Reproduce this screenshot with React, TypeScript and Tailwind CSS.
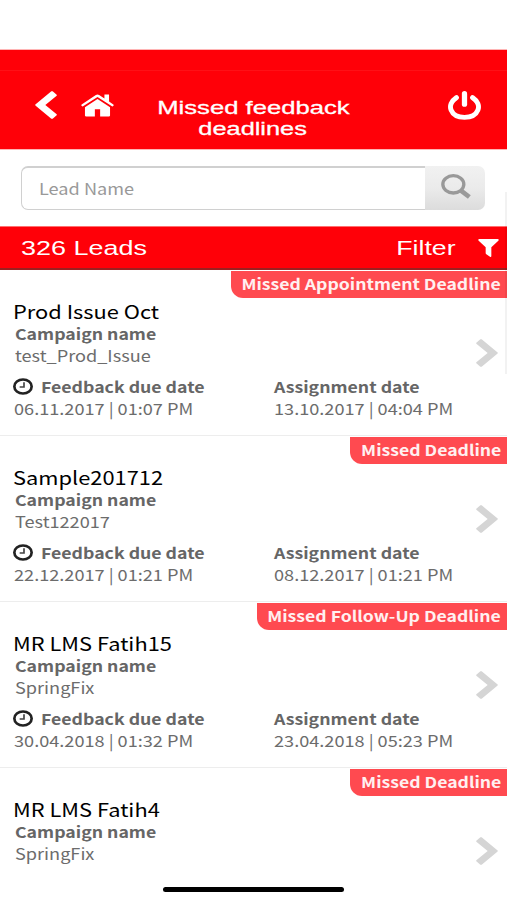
import type { ReactNode } from "react";

const leads = [
  {
    name: "Prod Issue Oct",
    campaign: "test_Prod_Issue",
    due: "06.11.2017 | 01:07 PM",
    assigned: "13.10.2017 | 04:04 PM",
    status: "Missed Appointment Deadline",
    tagWidth: "w-[276px]",
  },
  {
    name: "Sample201712",
    campaign: "Test122017",
    due: "22.12.2017 | 01:21 PM",
    assigned: "08.12.2017 | 01:21 PM",
    status: "Missed Deadline",
    tagWidth: "w-[157px]",
  },
  {
    name: "MR LMS Fatih15",
    campaign: "SpringFix",
    due: "30.04.2018 | 01:32 PM",
    assigned: "23.04.2018 | 05:23 PM",
    status: "Missed Follow-Up Deadline",
    tagWidth: "w-[250.500px]",
  },
  {
    name: "MR LMS Fatih4",
    campaign: "SpringFix",
    due: "",
    assigned: "",
    status: "Missed Deadline",
    tagWidth: "w-[157px]",
  },
];

// Wide text, stretched from its left edge
function Wide({ className, children }: { className: string; children: ReactNode }) {
  return (
    <span className={`block w-max origin-left whitespace-pre ${className}`}>{children}</span>
  );
}

function Label({ children }: { children: ReactNode }) {
  return (
    <Wide className="scale-x-[1.18] pt-px text-[15px] font-bold leading-[21px] text-[#666]">
      {children}
    </Wide>
  );
}

function Value({ children }: { children: ReactNode }) {
  return (
    <Wide className="scale-x-[1.17] text-[15.5px] leading-[22px] text-[#6c6c6c]">
      {children}
    </Wide>
  );
}

function ClockIcon() {
  return (
    <svg viewBox="0 0 60 51" className="mt-px h-[17px] w-5 shrink-0" fill="none">
      <ellipse cx="30" cy="25.5" rx="26" ry="21" stroke="#222" strokeWidth="8" />
      <path d="M33 13v14H20" stroke="#444" strokeWidth="5" />
    </svg>
  );
}

function LeadRow({ lead }: { lead: (typeof leads)[number] }) {
  return (
    <div className="relative h-[166px] shrink-0 border-b border-[#ededed] pt-[30px]">
      {/* Status tag */}
      <div
        className={`absolute right-0 top-px flex h-[26.5px] items-center justify-end rounded-bl-[12px] bg-[#ff4a50] pr-[6px] ${lead.tagWidth}`}
      >
        <span className="origin-right scale-x-[1.175] whitespace-pre text-[15px] font-bold leading-[26px] text-[#fff0f0]">
          {lead.status}
        </span>
      </div>

      <Wide className="ml-[13px] scale-x-[1.18] text-[18.5px] leading-[22px] text-black">
        {lead.name}
      </Wide>
      <div className="pl-[14.5px]">
        <Label>Campaign name</Label>
        <Value>{lead.campaign}</Value>
      </div>

      {lead.due && (
        <div className="mt-[9px] grid grid-cols-[260px_1fr] pl-[14px]">
          <div>
            <div className="-ml-px flex h-[22px] items-center gap-2">
              <ClockIcon />
              <Label>Feedback due date</Label>
            </div>
            <Value>{lead.due}</Value>
          </div>
          <div>
            <Label>Assignment date</Label>
            <Value>{lead.assigned}</Value>
          </div>
        </div>
      )}

      <svg
        viewBox="0 0 66 84"
        className="absolute right-[9px] top-[69px] h-7 w-[22px]"
        fill="#d5d5d5"
      >
        <path d="M17 1 64 40Q67 42 64 44L17 83Q15 84 13 83L1 73Q0 71 1 70L35 42 1 14Q0 13 1 11L13 1Q15 0 17 1Z" />
      </svg>
    </div>
  );
}

export default function App() {
  return (
    <div className="relative flex h-[900px] w-[507px] flex-col overflow-hidden bg-white font-['Noto_Sans_CJK_SC',sans-serif]">
      <div className="h-[49px] shrink-0" />

      {/* Header */}
      <header className="h-[101px] shrink-0 border-y border-[#ffb5b5] bg-[#ff0008] font-['Liberation_Sans',Arial,sans-serif] text-white">
        <div className="h-[21px] border-b border-[#ff1016]" />
        <div className="flex items-start pl-[35px] pr-[26px] pt-5">
          <svg viewBox="0 0 66 84" className="h-7 w-[22px]" fill="white">
            <path d="M49 1 2 40Q-1 42 2 44L49 83Q51 84 53 83L65 73Q66 71 65 70L31 42 65 14Q66 13 65 11L53 1Q51 0 49 1Z" />
          </svg>
          <svg viewBox="0 0 100 68" className="ml-6 mt-[3px] h-[23px] w-[33px]" fill="white">
            <path d="M45 2Q50-1 55 2L71 13V1H85V22L98 31Q101 34 95 37L50 8 5 37Q-1 34 2 31Z" />
            <path d="M50 14 88 39V64Q88 67 84 67H58V45H42V67H16Q12 67 12 64V39Z" />
          </svg>
          <div className="ml-[42px] mt-[6px] w-[194px]">
            <div className="flex flex-col items-center text-[18.5px] leading-[21px] [-webkit-text-stroke:0.3px_white]">
              <span className="scale-x-[1.385] whitespace-pre">Missed feedback</span>
              <span className="scale-x-[1.37] whitespace-pre">deadlines</span>
            </div>
          </div>
          <svg
            viewBox="0 0 99 88"
            className="-mt-[0.5px] ml-auto h-[29px] w-[33px]"
            fill="none"
            stroke="white"
            strokeWidth="15"
            strokeLinecap="round"
          >
            <path d="M25 20C-8 42 7 80 49.500 80S107 42 74 20" />
            <path d="M49.500 8V40" strokeWidth="16" />
          </svg>
        </div>
      </header>

      {/* Search */}
      <div className="flex h-[76px] shrink-0 items-start pl-[21px] pr-[22px] pt-4">
        <div className="flex h-11 flex-1 items-center rounded-l-[7px] border border-r-0 border-t-2 border-[#d0d0d0] pb-[2px] pl-[17px]">
          <Wide className="scale-x-[1.17] text-[15.5px] leading-[22px] text-[#999]">
            Lead Name
          </Wide>
        </div>
        <button className="flex h-11 w-[60px] justify-center rounded-r-[7px] bg-gradient-to-b from-[#f1f1f1] via-[#ebebeb] to-[#dcdcdc] pl-[2px] pt-2">
          <svg viewBox="0 0 90 75" className="h-[25px] w-[30px]" fill="none" stroke="#999">
            <ellipse cx="37" cy="31" rx="31.500" ry="26" strokeWidth="10" />
            <path d="m60 50 25 19" strokeWidth="14" />
          </svg>
        </button>
      </div>

      {/* Lead count and filter */}
      <div className="flex h-11 shrink-0 items-center border-b-2 border-t border-b-[#9c2020] border-t-[#ff7070] bg-[#ff0008] pl-[21px] pr-[8px] pt-px font-['Liberation_Sans',Arial,sans-serif] text-[20.5px] text-white">
        <Wide className="scale-x-[1.315]">326 Leads</Wide>
        <span className="ml-auto origin-right scale-x-[1.3]">Filter</span>
        <svg viewBox="0 0 63 54" className="ml-[22px] h-[18px] w-[21px]" fill="white">
          <path d="M3 0H60Q64 2 61 5L40 25V52Q39 55 36 53L25 46Q23 45 23 42V25L2 5Q-1 2 3 0Z" />
        </svg>
      </div>

      {/* Leads */}
      <main className="min-h-0 flex-1 overflow-hidden">
        {leads.map((lead) => (
          <LeadRow key={lead.name} lead={lead} />
        ))}
      </main>

      {/* Scroll thumb */}
      <div className="absolute right-0 top-[192px] h-[182px] w-[2px] bg-black/5" />

      {/* Home indicator */}
      <div className="absolute bottom-2 left-[163px] h-[5.500px] w-[181px] rounded-full bg-black" />
    </div>
  );
}
